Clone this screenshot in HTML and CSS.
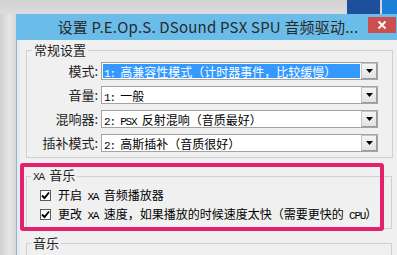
FILE: index.html
```html
<!DOCTYPE html>
<html>
<head>
<meta charset="utf-8">
<link rel="stylesheet" href="styles.css">
</head>
<body>
<div class="topstrip"><div class="tb-dark"></div><div class="tb-light"></div></div>
<div class="mainrow">
  <div class="leftstrip"></div>
  <div class="window">
    <div class="titlebar">
      <span class="title">设置 P.E.Op.S. DSound PSX SPU 音频驱动...</span>
      <div class="close"><svg width="10" height="10" viewBox="0 0 10 10"><path d="M1.5 1.5 L8.5 8.5 M8.5 1.5 L1.5 8.5" stroke="#fff" stroke-width="1.8" fill="none"/></svg></div>
    </div>
    <div class="frame">
      <div class="client">
        <fieldset class="group g1">
          <legend>常规设置</legend>
          <div class="row"><span class="lbl">模式:</span><div class="combo"><span class="val sel"><span class="l">1: </span>高兼容性模式（计时器事件，比较缓慢）</span><span class="btn"><svg width="7" height="4" viewBox="0 0 7 4"><path d="M0 0 H7 L3.5 4 Z" fill="#000"/></svg></span></div></div>
          <div class="row"><span class="lbl">音量:</span><div class="combo"><span class="val"><span class="l">1: </span>一般</span><span class="btn"><svg width="7" height="4" viewBox="0 0 7 4"><path d="M0 0 H7 L3.5 4 Z" fill="#000"/></svg></span></div></div>
          <div class="row"><span class="lbl">混响器:</span><div class="combo"><span class="val"><span class="l">2: PSX </span>反射混响（音质最好）</span><span class="btn"><svg width="7" height="4" viewBox="0 0 7 4"><path d="M0 0 H7 L3.5 4 Z" fill="#000"/></svg></span></div></div>
          <div class="row"><span class="lbl">插补模式:</span><div class="combo"><span class="val"><span class="l">2: </span>高斯插补（音质很好）</span><span class="btn"><svg width="7" height="4" viewBox="0 0 7 4"><path d="M0 0 H7 L3.5 4 Z" fill="#000"/></svg></span></div></div>
        </fieldset>
        <fieldset class="group g2">
          <legend><span class="l">XA </span>音乐</legend>
          <div class="chk"><span class="box"><svg width="9" height="9" viewBox="0 0 9 9"><path d="M1 4.5 L3.5 7 L8 1.5" stroke="#000" stroke-width="1.9" fill="none"/></svg></span><span class="txt">开启<span class="l"> XA </span>音频播放器</span></div>
          <div class="chk"><span class="box"><svg width="9" height="9" viewBox="0 0 9 9"><path d="M1 4.5 L3.5 7 L8 1.5" stroke="#000" stroke-width="1.9" fill="none"/></svg></span><span class="txt">更改<span class="l"> XA </span>速度，如果播放的时候速度太快（需要更快的<span class="l"> CPU</span>）</span></div>
        </fieldset>
        <fieldset class="group g3">
          <legend>音乐</legend>
          <div class="chk"><span class="box"></span><span class="txt"><span class="l">SPU IRQ - </span>等待<span class="l"> CPU </span>指令（只对极少数游戏有效）</span></div>
        </fieldset>
        <div class="highlight"></div>
      </div>
    </div>
  </div>
</div>
</body>
</html>
```
FILE: styles.css
```css
* { box-sizing: border-box; margin: 0; padding: 0; }
html, body { width: 397px; height: 255px; overflow: hidden; }
body { background: #d9d9d9; font-family: "Noto Sans CJK SC", sans-serif; color: #1e1e1e; }

.topstrip { height: 14px; display: flex; justify-content: flex-end; background: linear-gradient(#d2d2d2, #dcdcdc); }
.tb-dark { width: 33px; background: #1d4f9c; margin-right: 2px; }
.tb-light { width: 15px; background: #1b7fd8; }

.mainrow { display: flex; }
.leftstrip { width: 16px; flex-shrink: 0; background: linear-gradient(to right, #d0d0d0, #e6e6e6 60%, #d6d6d6); }

.window { width: 384px; flex-shrink: 0; }
.titlebar { height: 26px; background: #6bbde9; position: relative; display: flex; align-items: center; justify-content: center; }
.title { font-family: "Noto Sans CJK SC", sans-serif; font-size: 15px; line-height: 18px; color: #2a2a2a; letter-spacing: 0.2px; }
.close { position: absolute; top: 3px; right: 4px; width: 28px; height: 16px; background: #c9504e; display: flex; align-items: center; justify-content: center; }

.frame { border-left: 1px solid #98b4c8; padding-left: 3px; background: #e4ecf1; }
.client { background: #f0f0f0; height: 215px; position: relative; padding-top: 2px; }

.group { width: 366px; margin-left: 6px; border: 1px solid #d0d0d0; padding: 0; }
.group legend { margin-left: 4px; padding: 0 2px; font-size: 13px; line-height: 16px; color: #1e1e1e; }

.l { font-family: "Liberation Mono", monospace; font-size: 11px; letter-spacing: -1.2px; }

.g1 { padding: 4px 14px 5px 1px; display: flex; flex-direction: column; gap: 6px; }
.row { display: flex; align-items: center; height: 18px; gap: 3px; }
.lbl { width: 70px; text-align: right; font-size: 13px; line-height: 18px; }
.combo { width: 277px; height: 18px; border: 1px solid #a3a3a3; background: #fff; display: flex; padding: 1px 0 1px 1px; }
.val { flex: 1; font-family: "Noto Sans CJK SC", sans-serif; font-size: 12px; line-height: 16px; padding-left: 1px; color: #000; white-space: nowrap; }
.val.sel { background: #3399ff; color: #fff; margin-right: 1px; }
.btn { width: 16px; height: 16px; margin-top: -1px; border: 1px solid #c4c4c4; border-right-color: #9c9c9c; border-bottom-color: #9c9c9c; background: linear-gradient(#f4f4f4, #e2e2e2); display: flex; align-items: center; justify-content: center; }

.g2 { margin-top: 9px; padding: 1px 0 4px 0; }
.g3 { margin-top: 6px; padding: 1px 0 4px 0; }
.chk { display: flex; align-items: center; height: 19px; gap: 7px; margin-left: 13px; }
.box { width: 11px; height: 11px; border: 1px solid #5a5a5a; background: #fff; display: flex; align-items: center; justify-content: center; }
.txt { font-family: "Noto Sans CJK SC", sans-serif; font-size: 12px; line-height: 16px; color: #000; white-space: nowrap; }

.highlight { position: absolute; left: 0; top: 123px; width: 364px; height: 68px; border: 4px solid #e2216c; border-radius: 3px; }
```
